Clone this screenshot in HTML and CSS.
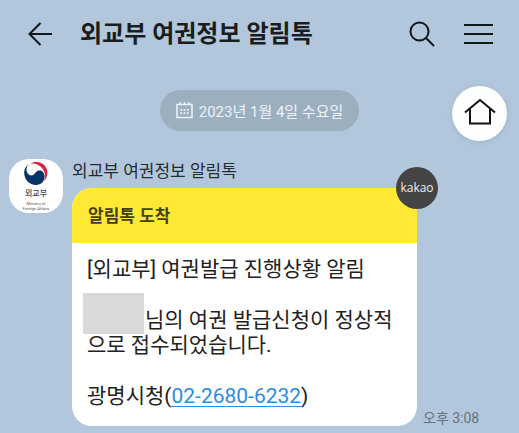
FILE: index.html
```html
<!DOCTYPE html>
<html lang="ko">
<head>
<meta charset="utf-8">
<meta name="viewport" content="width=device-width, initial-scale=1">
<title>외교부 여권정보 알림톡</title>
<link rel="stylesheet" href="styles.css">
</head>
<body>
<header class="topbar">
  <button class="icon-button" type="button" aria-label="뒤로">
    <svg width="24" height="24" viewBox="0 0 24 24" fill="none" stroke="currentColor" stroke-width="2"><path d="M12.5 1 1.5 12l11 11M1.5 12H24"/></svg>
  </button>
  <h1 class="title">외교부 여권정보 알림톡</h1>
  <button class="icon-button" type="button" aria-label="검색">
    <svg width="26" height="26" viewBox="0 0 26 26" fill="none" stroke="currentColor" stroke-width="2"><circle cx="10.5" cy="10.5" r="9"/><path d="m17 17 8 8"/></svg>
  </button>
  <button class="icon-button menu" type="button" aria-label="메뉴">
    <svg width="30" height="22" viewBox="0 0 30 22" fill="none" stroke="currentColor" stroke-width="2"><path d="M0 2h29M0 11h29M0 20h29"/></svg>
  </button>
</header>
<main class="chat">
  <div class="date">
    <svg width="17" height="17" viewBox="0 0 17 17" fill="none" stroke="currentColor"><path stroke-width="1.500" d="M1 2.600h15v13H1zM4 0v3M8.500 0v3M13 0v3"/><path stroke-width="1.800" d="M4.300 7.800h1.800m1.500 0h1.800m1.500 0h1.800M4.300 11.200h1.800m1.500 0h1.800m1.500 0h1.800"/></svg>
    <time datetime="2023-01-04">2023년 1월 4일 수요일</time>
  </div>
  <button class="home" type="button" aria-label="홈">
    <svg width="32" height="28" viewBox="0 0 32 28" fill="none" stroke="currentColor" stroke-width="2"><path d="M1 14.500 16 2l15 12.500M6 11v14.500h20V11"/></svg>
  </button>
  <article class="message">
    <div class="avatar">
      <svg width="26" height="25" viewBox="0 0 26 25" fill="none"><path d="M7 2.700C13-.5 20 1 23.300 7c2.200 4.500 1 9.500-2.300 13 1.500-4.500 1.300-8.500-1-11.800C17 3.800 12 2 7 2.700z" fill="#d8203f"/><path d="M6.500 2.500C2.500 5 1 9 1.200 12.500 1.600 19 6.500 24 13 24c5.500 0 8.500-4 8.500-8.500 0-4-2.500-6.500-5.500-6-3.500.5-4 4-6.500 4.800C6 15 3.300 12 3.500 8c.1-2.200 1.300-4.200 3-5.500z" fill="#063466"/></svg>
      <span class="avatar-name">외교부</span>
      <svg class="avatar-caption" width="30" height="12" viewBox="0 0 30 12" aria-label="Ministry of Foreign Affairs"><text x="15" y="4">Ministry of</text><text x="15" y="9">Foreign Affairs</text></svg>
    </div>
    <div class="content">
      <h2 class="sender">외교부 여권정보 알림톡</h2>
      <div class="row">
        <div class="bubble">
          <div class="banner">알림톡 도착</div>
          <span class="badge">kakao</span>
          <div class="body">
            <p>[외교부] 여권발급 진행상황 알림</p>
            <p><span class="mask"></span>님의 여권 발급신청이 정상적으로 접수되었습니다.</p>
            <p>광명시청(<a href="tel:02-2680-6232">02-2680-6232</a>)</p>
          </div>
        </div>
        <time class="sent">오후 3:08</time>
      </div>
    </div>
  </article>
</main>
</body>
</html>
```
FILE: styles.css
```css
* {
  box-sizing: border-box;
}

body {
  margin: 0;
  background: #b2c7db;
  color: #191d20;
  font-family: Roboto, "Noto Sans CJK KR", sans-serif;
}

h1,
h2,
p {
  margin: 0;
}

svg {
  display: block;
}

.topbar {
  display: flex;
  align-items: center;
  height: 68px;
  padding: 0 25px 0 28px;
}

.icon-button {
  display: flex;
  padding: 0;
  border: 0;
  background: none;
  color: #111619;
}

.title {
  flex: 1;
  margin-left: 28px;
  font-size: 24px;
  line-height: 36px;
  font-weight: 700;
  white-space: nowrap;
}

.menu {
  margin-left: 29px;
}

.chat {
  position: relative;
  padding: 22px 8px 8px;
}

.date {
  display: flex;
  align-items: center;
  gap: 6px;
  width: fit-content;
  height: 41px;
  margin: 0 auto;
  padding: 0 16px;
  border-radius: 21px;
  background: #9cafbf;
  color: #edf3f8;
  font-size: 15px;
  white-space: nowrap;
}

.home {
  position: absolute;
  top: 18px;
  right: 12px;
  display: flex;
  align-items: center;
  justify-content: center;
  width: 55px;
  height: 55px;
  padding: 0 0 3px;
  border: 0;
  border-radius: 50%;
  background: #fdfefe;
  color: #111;
  box-shadow: 0 1px 5px #8096aa66;
}

.message {
  display: flex;
  gap: 9px;
  margin-top: 28px;
  padding-left: 1px;
}

.avatar {
  display: flex;
  flex: none;
  flex-direction: column;
  align-items: center;
  width: 54px;
  height: 54px;
  padding-top: 2px;
  border-radius: 20px;
  background: #fff;
}

.avatar-name {
  color: #444;
  font-size: 8px;
  line-height: 15px;
  font-weight: 500;
}

.avatar-caption text {
  fill: #555;
  font-size: 4px;
  text-anchor: middle;
}

.content {
  flex: 1;
}

.sender {
  color: #252d34;
  font-size: 17px;
  line-height: 25px;
  font-weight: 400;
}

.row {
  display: flex;
  align-items: flex-end;
  gap: 6px;
  margin-top: 4px;
}

.bubble {
  position: relative;
  flex: 0 1 345px;
  border-radius: 20px;
  background: #fff;
}

.banner {
  padding: 16px 16px 14px;
  border-radius: 20px 0 0 0;
  background: #ffe934;
  color: #453f18;
  font-size: 17px;
  line-height: 25px;
  font-weight: 700;
}

.badge {
  position: absolute;
  top: -21px;
  right: -21px;
  width: 42px;
  height: 42px;
  border-radius: 50%;
  background: #444;
  color: #eee;
  font-family: "Open Sans", sans-serif;
  font-size: 12px;
  font-weight: 500;
  line-height: 41px;
  text-align: center;
}

.body {
  display: flex;
  flex-direction: column;
  gap: 26px;
  padding: 14px 15px 17px;
  color: #222;
  font-size: 21px;
  line-height: 25px;
  word-break: break-all;
}

.mask {
  display: inline-block;
  width: 61px;
  height: 41px;
  margin: -20px 1px -4px -4px;
  vertical-align: middle;
  background: #d9d9d9;
}

.body a {
  color: #318bdc;
  text-decoration-thickness: 1px;
  text-underline-offset: 3px;
}

.sent {
  color: #65727e;
  font-size: 14px;
  line-height: 16px;
  white-space: nowrap;
}
```
